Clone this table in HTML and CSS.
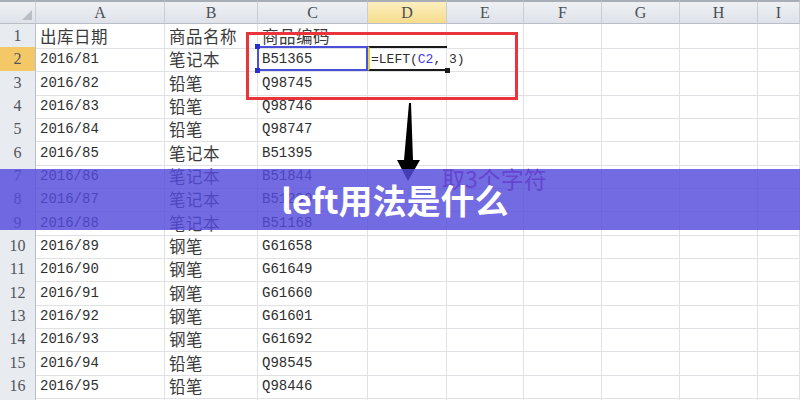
FILE: index.html
```html
<!DOCTYPE html>
<html>
<head>
<meta charset="utf-8">
<link rel="stylesheet" href="styles.css">
</head>
<body>
<div class="sheet">
  <div class="row head">
    <div class="corner"><span class="tri"></span></div>
    <div class="ch">A</div><div class="ch">B</div><div class="ch">C</div><div class="ch on">D</div><div class="ch">E</div><div class="ch">F</div><div class="ch">G</div><div class="ch">H</div><div class="ch">I</div>
  </div>
  <div class="row"><div class="rh">1</div><div class="c cn">出库日期</div><div class="c cn">商品名称</div><div class="c cn">商品编码</div><div class="c"></div><div class="c"></div><div class="c"></div><div class="c"></div><div class="c"></div><div class="c"></div></div>
  <div class="row"><div class="rh on">2</div><div class="c num">2016/81</div><div class="c cn">笔记本</div><div class="c num">B51365</div><div class="c num fx">=LEFT(<span class="ref">C2</span>, 3)</div><div class="c"></div><div class="c"></div><div class="c"></div><div class="c"></div><div class="c"></div></div>
  <div class="row"><div class="rh">3</div><div class="c num">2016/82</div><div class="c cn">铅笔</div><div class="c num">Q98745</div><div class="c"></div><div class="c"></div><div class="c"></div><div class="c"></div><div class="c"></div><div class="c"></div></div>
  <div class="row"><div class="rh">4</div><div class="c num">2016/83</div><div class="c cn">铅笔</div><div class="c num">Q98746</div><div class="c"></div><div class="c"></div><div class="c"></div><div class="c"></div><div class="c"></div><div class="c"></div></div>
  <div class="row"><div class="rh">5</div><div class="c num">2016/84</div><div class="c cn">铅笔</div><div class="c num">Q98747</div><div class="c"></div><div class="c"></div><div class="c"></div><div class="c"></div><div class="c"></div><div class="c"></div></div>
  <div class="row"><div class="rh">6</div><div class="c num">2016/85</div><div class="c cn">笔记本</div><div class="c num">B51395</div><div class="c"></div><div class="c"></div><div class="c"></div><div class="c"></div><div class="c"></div><div class="c"></div></div>
  <div class="row"><div class="rh">7</div><div class="c num">2016/86</div><div class="c cn">笔记本</div><div class="c num">B51844</div><div class="c"></div><div class="c"></div><div class="c"></div><div class="c"></div><div class="c"></div><div class="c"></div></div>
  <div class="row"><div class="rh">8</div><div class="c num">2016/87</div><div class="c cn">笔记本</div><div class="c num">B51290</div><div class="c"></div><div class="c"></div><div class="c"></div><div class="c"></div><div class="c"></div><div class="c"></div></div>
  <div class="row"><div class="rh">9</div><div class="c num">2016/88</div><div class="c cn">笔记本</div><div class="c num">B51168</div><div class="c"></div><div class="c"></div><div class="c"></div><div class="c"></div><div class="c"></div><div class="c"></div></div>
  <div class="row"><div class="rh">10</div><div class="c num">2016/89</div><div class="c cn">钢笔</div><div class="c num">G61658</div><div class="c"></div><div class="c"></div><div class="c"></div><div class="c"></div><div class="c"></div><div class="c"></div></div>
  <div class="row"><div class="rh">11</div><div class="c num">2016/90</div><div class="c cn">钢笔</div><div class="c num">G61649</div><div class="c"></div><div class="c"></div><div class="c"></div><div class="c"></div><div class="c"></div><div class="c"></div></div>
  <div class="row"><div class="rh">12</div><div class="c num">2016/91</div><div class="c cn">钢笔</div><div class="c num">G61660</div><div class="c"></div><div class="c"></div><div class="c"></div><div class="c"></div><div class="c"></div><div class="c"></div></div>
  <div class="row"><div class="rh">13</div><div class="c num">2016/92</div><div class="c cn">钢笔</div><div class="c num">G61601</div><div class="c"></div><div class="c"></div><div class="c"></div><div class="c"></div><div class="c"></div><div class="c"></div></div>
  <div class="row"><div class="rh">14</div><div class="c num">2016/93</div><div class="c cn">钢笔</div><div class="c num">G61692</div><div class="c"></div><div class="c"></div><div class="c"></div><div class="c"></div><div class="c"></div><div class="c"></div></div>
  <div class="row"><div class="rh">15</div><div class="c num">2016/94</div><div class="c cn">铅笔</div><div class="c num">Q98545</div><div class="c"></div><div class="c"></div><div class="c"></div><div class="c"></div><div class="c"></div><div class="c"></div></div>
  <div class="row"><div class="rh">16</div><div class="c num">2016/95</div><div class="c cn">铅笔</div><div class="c num">Q98446</div><div class="c"></div><div class="c"></div><div class="c"></div><div class="c"></div><div class="c"></div><div class="c"></div></div>
  <div class="row"><div class="rh"></div><div class="c"></div><div class="c"></div><div class="c"></div><div class="c"></div><div class="c"></div><div class="c"></div><div class="c"></div><div class="c"></div><div class="c"></div></div>

  <div class="sel-c2"><i class="h tl"></i><i class="h bl"></i></div>
  <div class="sel-d2"><i class="h br"></i></div>
  <div class="redbox"></div>
  <svg class="arrow" width="26" height="82" viewBox="0 0 26 82"><path d="M13 3 L15 3 L17 60 L24 60 L12 81 L1 60 L8 60 Z" fill="#000"/></svg>
  <div class="note">取3个字符</div>
  <div class="banner"><h1 class="title">left用法是什么</h1></div>
</div>
</body>
</html>
```

FILE: styles.css
```css
html, body {
  margin: 0;
  padding: 0;
  background: #fff;
  overflow: hidden;
}
.sheet {
  position: relative;
  width: 800px;
  height: 400px;
  overflow: hidden;
}
.row {
  display: grid;
  grid-template-columns: 36px 129px 93px 110px 79px 77px 78px 78px 78px 42px;
  height: 23.333px;
}
.row.head {
  height: 24px;
}
.corner, .ch {
  box-sizing: border-box;
  border-top: 2px solid #a9aeb6;
  border-bottom: 1px solid #b9bfc8;
  border-right: 1px solid #c9ced6;
  background: linear-gradient(#eef0f4, #dfe3e9);
}
.corner {
  position: relative;
}
.tri {
  position: absolute;
  right: 3px;
  bottom: 3px;
  width: 0;
  height: 0;
  border-left: 10px solid transparent;
  border-bottom: 10px solid #b9bec6;
}
.ch {
  font-family: "Liberation Serif", serif;
  font-size: 16px;
  color: #4a4f57;
  display: flex;
  align-items: center;
  justify-content: center;
}
.ch.on {
  background: linear-gradient(#fcefc0, #f6dc8c);
}
.rh {
  box-sizing: border-box;
  border-right: 1px solid #b9bfc8;
  border-bottom: 1px solid #cfd4db;
  background: #e8ebf0;
  font-family: "Liberation Serif", serif;
  font-size: 16px;
  color: #50555c;
  display: flex;
  align-items: center;
  justify-content: center;
}
.rh.on {
  background: #f5c867;
}
.c {
  box-sizing: border-box;
  border-right: 1px solid #dfe1e4;
  border-bottom: 1px solid #dfe1e4;
  padding-left: 4px;
  display: flex;
  align-items: center;
  white-space: nowrap;
  color: #2e2e2e;
}
.cn {
  font-family: "Noto Sans CJK SC", sans-serif;
  font-size: 16.5px;
  letter-spacing: 0.5px;
  color: #3a3a3a;
}
.num {
  font-family: "Liberation Mono", monospace;
  font-size: 14px;
}
.fx {
  font-size: 13px;
  padding-left: 3px;
  overflow: visible;
}
.ref {
  color: #3b3be0;
}
.sel-c2 {
  position: absolute;
  left: 257px;
  top: 46px;
  width: 111px;
  height: 25px;
  box-sizing: border-box;
  border: 2px solid #4a4fd8;
}
.sel-d2 {
  position: absolute;
  left: 368px;
  top: 46px;
  width: 79px;
  height: 25px;
  box-sizing: border-box;
  border-top: 2px solid #1a1a1a;
  border-bottom: 2px solid #1a1a1a;
  border-left: 2px solid #e3d24a;
}
.h {
  position: absolute;
  width: 5px;
  height: 5px;
  background: #2a2fd0;
}
.tl { left: -4px; top: -4px; }
.bl { left: -4px; bottom: -4px; }
.br { right: -3px; bottom: -4px; background: #1a1a1a; }
.redbox {
  position: absolute;
  left: 246px;
  top: 32px;
  width: 272px;
  height: 68px;
  box-sizing: border-box;
  border: 3px solid #e8343a;
}
.arrow {
  position: absolute;
  left: 396px;
  top: 100px;
}
.note {
  position: absolute;
  left: 442px;
  top: 163px;
  font-family: "Noto Sans CJK SC", sans-serif;
  font-size: 23px;
  line-height: 30px;
  color: #b02a90;
}
.banner {
  position: absolute;
  left: 0;
  top: 169px;
  width: 800px;
  height: 61px;
  background: rgba(84, 74, 220, 0.82);
  display: flex;
  align-items: center;
  justify-content: center;
  padding-right: 10px;
  box-sizing: border-box;
}
.title {
  margin: 0;
  font-family: "Noto Sans CJK SC", sans-serif;
  font-weight: 700;
  font-size: 34px;
  line-height: 1;
  color: #fff;
}
```
